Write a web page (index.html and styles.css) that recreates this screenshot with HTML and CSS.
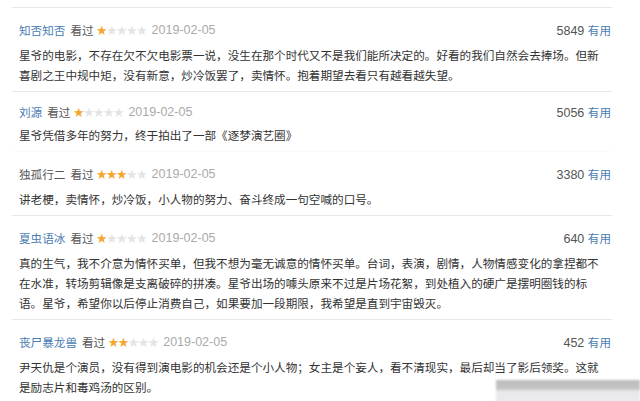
FILE: index.html
```html
<!DOCTYPE html>
<html lang="zh-CN">
<head>
    <meta charset="UTF-8">
    <title>短评</title>
    <link rel="stylesheet" href="styles.css">
</head>
<body>

    <div class="comments">
        <!-- 短评 1 -->
        <div class="comment">
            <div class="comment-info">
                <span class="meta">
                    <a class="user">知否知否</a>
                    <span class="watched">看过</span>
                    <span class="stars"><i class="on">★</i><i>★</i><i>★</i><i>★</i><i>★</i></span>
                    <span class="time">2019-02-05</span>
                </span>
                <span class="votes">5849 <a>有用</a></span>
            </div>
            <p class="short">星爷的电影，不存在欠不欠电影票一说，没生在那个时代又不是我们能所决定的。好看的我们自然会去捧场。但新<br>喜剧之王中规中矩，没有新意，炒冷饭罢了，卖情怀。抱着期望去看只有越看越失望。</p>
        </div>

        <div class="comment no-line">
            <div class="comment-info">
                <span class="meta">
                    <a class="user">刘源</a>
                    <span class="watched">看过</span>
                    <span class="stars"><i class="on">★</i><i>★</i><i>★</i><i>★</i><i>★</i></span>
                    <span class="time">2019-02-05</span>
                </span>
                <span class="votes">5056 <a>有用</a></span>
            </div>
            <p class="short tight">星爷凭借多年的努力，终于拍出了一部《逐梦演艺圈》</p>
        </div>

        <div class="comment">
            <div class="comment-info">
                <span class="meta">
                    <a class="user plain">独孤行二</a>
                    <span class="watched">看过</span>
                    <span class="stars"><i class="on">★</i><i class="on">★</i><i class="on">★</i><i>★</i><i>★</i></span>
                    <span class="time">2019-02-05</span>
                </span>
                <span class="votes">3380 <a>有用</a></span>
            </div>
            <p class="short">讲老梗，卖情怀，炒冷饭，小人物的努力、奋斗终成一句空喊的口号。</p>
        </div>

        <div class="comment">
            <div class="comment-info">
                <span class="meta">
                    <a class="user">夏虫语冰</a>
                    <span class="watched">看过</span>
                    <span class="stars"><i class="on">★</i><i>★</i><i>★</i><i>★</i><i>★</i></span>
                    <span class="time">2019-02-05</span>
                </span>
                <span class="votes">640 <a>有用</a></span>
            </div>
            <p class="short">真的生气，我不介意为情怀买单，但我不想为毫无诚意的情怀买单。台词，表演，剧情，人物情感变化的拿捏都不<br>在水准，转场剪辑像是支离破碎的拼凑。星爷出场的噱头原来不过是片场花絮，到处植入的硬广是摆明圈钱的标<br>语。星爷，希望你以后停止消费自己，如果要加一段期限，我希望是直到宇宙毁灭。</p>
        </div>

        <div class="comment">
            <div class="comment-info">
                <span class="meta">
                    <a class="user">丧尸暴龙兽</a>
                    <span class="watched">看过</span>
                    <span class="stars"><i class="on">★</i><i class="on">★</i><i>★</i><i>★</i><i>★</i></span>
                    <span class="time">2019-02-05</span>
                </span>
                <span class="votes">452 <a>有用</a></span>
            </div>
            <p class="short">尹天仇是个演员，没有得到演电影的机会还是个小人物；女主是个妄人，看不清现实，最后却当了影后领奖。这就<br>是励志片和毒鸡汤的区别。</p>
        </div>
    </div>

    <!-- 水印 -->
    <div class="watermark"></div>

</body>
</html>
```

FILE: styles.css
```css
body {
    margin: 0;
    padding: 7px 0 0 0;
    background: #fff;
    font-family: "Noto Sans CJK SC", "Noto Sans", sans-serif;
    color: #333;
    overflow: hidden;
    height: 401px;
    position: relative;
}

.comments {
    margin-left: 12px;
    width: 600px;
}

.comment {
    border-top: 1px solid #e8e8e8;
    padding: 12px 1px 6px 7px;
}

.comment.no-line {
    padding-top: 10px;
}

.comment.no-line + .comment {
    border-top-color: #fbfbfb;
}

.comment-info {
    display: flex;
    justify-content: space-between;
    align-items: center;
    height: 20px;
    font-size: 11.6px;
}

.meta {
    display: flex;
    align-items: center;
}

.user {
    color: #4a7db3;
    margin-right: 5px;
}

.user.plain {
    color: #555;
}

.watched {
    color: #555;
    margin-right: 3px;
}

.stars {
    display: flex;
    margin-right: 5px;
}

.stars i {
    font-style: normal;
    font-size: 10.5px;
    width: 10px;
    color: #e4e4e4;
    line-height: 1;
}

.stars i.on {
    color: #f3a72c;
}

.time {
    color: #aaa;
    font-family: "Liberation Sans", Arial, sans-serif;
    font-size: 12.5px;
}

.votes {
    color: #555;
    font-family: "Liberation Sans", Arial, sans-serif;
    font-size: 12.5px;
}

.votes a {
    color: #4a7db3;
    font-family: "Noto Sans CJK SC", sans-serif;
    font-size: 11.6px;
}

.short {
    margin: 5px 0 0 0;
    font-size: 11.6px;
    line-height: 20px;
    color: #333;
}

.short.tight {
    margin-top: 3px;
}

.watermark {
    position: absolute;
    right: 0;
    bottom: 0;
    width: 144px;
    height: 28px;
    background: linear-gradient(#bdbdbd 0, #c4c4c4 9px, #e9e9ec 11px, #ececef 100%);
    filter: blur(1px);
}
```
